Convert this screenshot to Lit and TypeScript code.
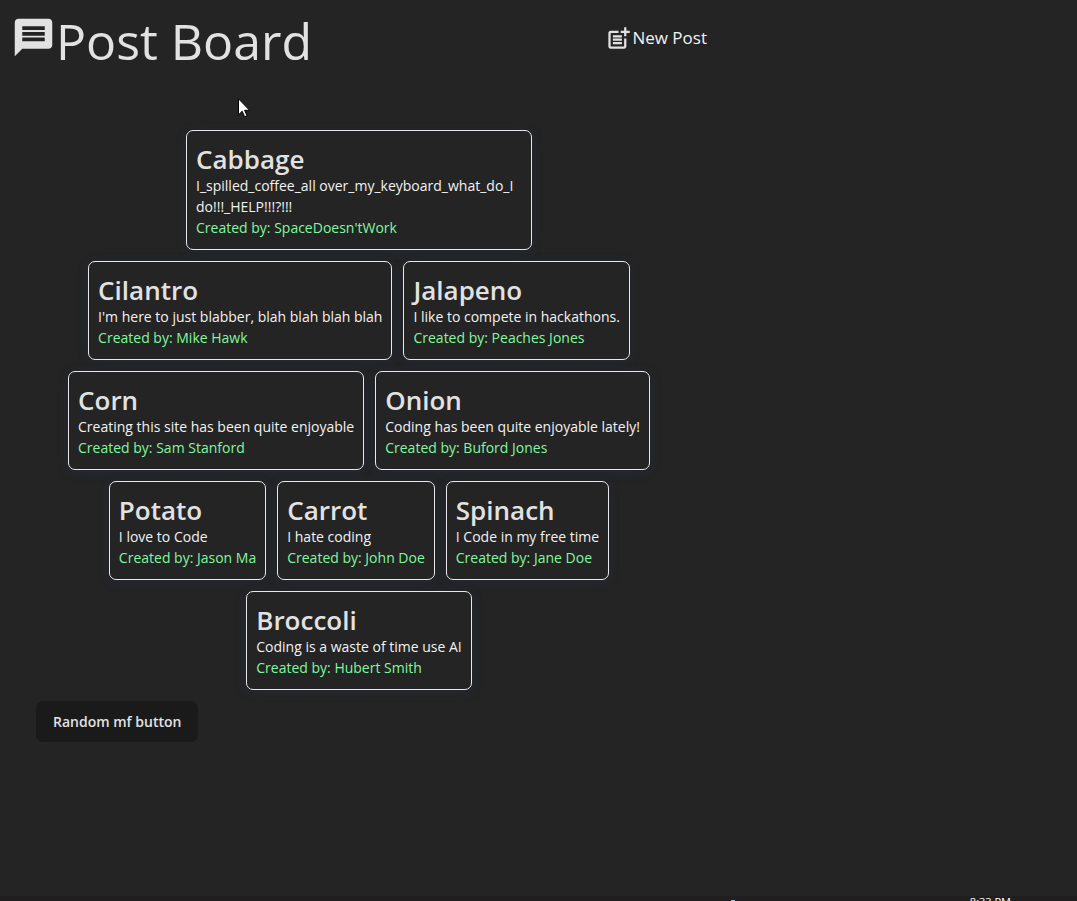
import { LitElement, html, css, svg } from "lit";
import { customElement, property } from "lit/decorators.js";

interface Post {
  title: string;
  body: string;
  author: string;
}

const POSTS: Post[] = [
  { title: "Cabbage", body: "I_spilled_coffee_all over_my_keyboard_what_do_I do!!!_HELP!!!?!!!", author: "SpaceDoesn'tWork" },
  { title: "Cilantro", body: "I'm here to just blabber, blah blah blah blah", author: "Mike Hawk" },
  { title: "Jalapeno", body: "I like to compete in hackathons.", author: "Peaches Jones" },
  { title: "Corn", body: "Creating this site has been quite enjoyable", author: "Sam Stanford" },
  { title: "Onion", body: "Coding has been quite enjoyable lately!", author: "Buford Jones" },
  { title: "Potato", body: "I love to Code", author: "Jason Ma" },
  { title: "Carrot", body: "I hate coding", author: "John Doe" },
  { title: "Spinach", body: "I Code in my free time", author: "Jane Doe" },
  { title: "Broccoli", body: "Coding is a waste of time use AI", author: "Hubert Smith" },
];

@customElement("post-card")
export class PostCard extends LitElement {
  @property({ attribute: false }) post!: Post;

  static styles = css`
    :host {
      display: block;
      box-sizing: border-box;
      max-width: 346px;
      padding: 12px 9px 10px;
      border: 1px solid #e8e8ec;
      border-radius: 7px;
      background: #242424;
      box-shadow: 0 2px 12px rgba(35, 60, 110, 0.2);
    }
    .title {
      margin: 0;
      font-size: 26px;
      line-height: 32px;
      font-weight: 600;
      color: #e2e2e2;
    }
    .body,
    .author {
      margin: 0;
      font-size: 14px;
    }
    .body {
      line-height: 21px;
      color: #f2f2f2;
    }
    .author {
      line-height: 22px;
      color: #80f89f;
    }
  `;

  render() {
    return html`
      <h2 class="title">${this.post.title}</h2>
      <p class="body">${this.post.body}</p>
      <p class="author">Created by: ${this.post.author}</p>
    `;
  }
}

@customElement("app-root")
export class AppRoot extends LitElement {
  static styles = css`
    :host {
      display: flex;
      flex-direction: column;
      box-sizing: border-box;
      position: relative;
      min-height: 100vh;
      background: #242424;
      color: #e2e2e2;
      font-family: "Segoe UI", "Open Sans", "Noto Sans", sans-serif;
    }
    .content {
      flex: 1;
      max-width: 718px;
    }
    .header {
      display: flex;
      justify-content: space-between;
      align-items: flex-start;
      padding: 4px 11px 0 11px;
    }
    .brand {
      display: flex;
      align-items: flex-start;
      margin: 0;
      font-size: 50px;
      line-height: 74px;
      font-weight: 400;
    }
    .brand-icon {
      width: 45px;
      height: 45px;
      margin-top: 11px;
    }
    .new-post {
      display: flex;
      align-items: center;
      margin-top: 20px;
      font-size: 17px;
      line-height: 28px;
      color: #f2f2f2;
      text-decoration: none;
    }
    .new-icon {
      width: 27px;
      height: 27px;
      color: #e2e2e2;
    }
    .posts {
      display: flex;
      flex-wrap: wrap;
      justify-content: center;
      gap: 11px;
      padding: 52px 36px 11px;
    }
    .action {
      margin-left: 36px;
      padding: 0 17px;
      border: 0;
      border-radius: 7px;
      background: #1a1a1a;
      color: #e2e2e2;
      font: 600 14px/41px "Segoe UI", "Open Sans", "Noto Sans", sans-serif;
    }
    .pointer {
      position: absolute;
      left: 238px;
      top: 98px;
      width: 12px;
      height: 20px;
    }
    .taskbar {
      display: flex;
      justify-content: flex-end;
      align-items: flex-start;
      gap: 235px;
      height: 5px;
      padding-right: 66px;
      overflow: hidden;
      background: #201e1f;
      color: #fff;
      font-size: 11px;
      line-height: 11px;
    }
    .indicator {
      width: 4px;
      height: 1px;
      margin-top: 4px;
      background: #8cc4ea;
    }
  `;

  render() {
    return html`
      <main class="content">
        <header class="header">
          <h1 class="brand">
            <svg class="brand-icon" viewBox="0 0 24 24" fill="currentColor" aria-hidden="true">
              ${svg`<path d="M20 2H4c-1.100 0-1.990.9-1.990 2L2 22l4-4h14c1.100 0 2-.9 2-2V4c0-1.100-.9-2-2-2zm-2 12H6v-2h12v2zm0-3H6V9h12v2zm0-3H6V6h12v2z"/>`}
            </svg>
            Post Board
          </h1>
          <a class="new-post" href="#new">
            <svg class="new-icon" viewBox="0 0 24 24" fill="currentColor" aria-hidden="true">
              ${svg`<path d="M17 19.220H5V7h7V5H5c-1.100 0-2 .9-2 2v12c0 1.100.9 2 2 2h12c1.100 0 2-.9 2-2v-7h-2v7.220z"/><path d="M19 2h-2v3h-3c.010.010 0 2 0 2h3v2.990c.010.010 2 0 2 0V7h3V5h-3V2zM7 9h8v2H7zM7 12v2h8v-2H7zM7 15h8v2H7z"/>`}
            </svg>
            New Post
          </a>
        </header>
        <section class="posts">
          ${POSTS.map((post) => html`<post-card .post=${post}></post-card>`)}
        </section>
        <button class="action" type="button">Random mf button</button>
      </main>
      <footer class="taskbar"><span class="indicator"></span>8:33 PM</footer>
      <svg class="pointer" viewBox="0 0 12 20" aria-hidden="true">
        <path d="M.5.8v16l3.700-3.600 2.400 5.500 2.400-1-2.400-5.400h5z" fill="#fff" stroke="#000" />
      </svg>
    `;
  }
}
